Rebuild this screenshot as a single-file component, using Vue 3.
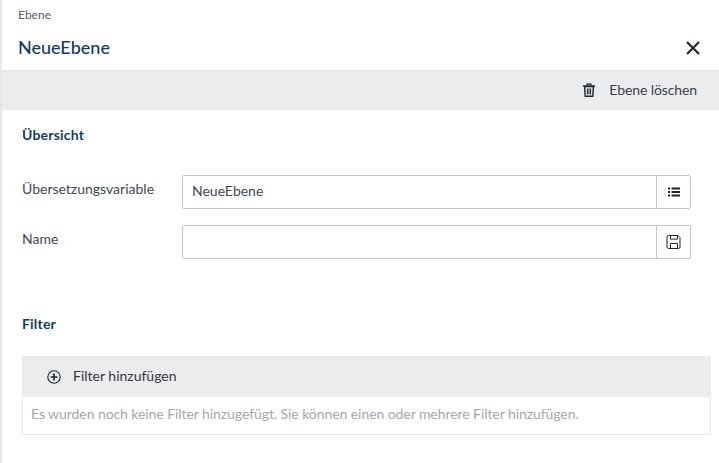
<template>
  <div class="panel">
    <header class="head">
      <div class="kicker">Ebene</div>
      <div class="title-row">
        <h1 class="title">NeueEbene</h1>
        <button class="close" aria-label="Schließen">
          <svg width="16" height="16" viewBox="0 0 16 16"><path d="M2 2 L14 14 M14 2 L2 14" stroke="#1f2a36" stroke-width="2.2" fill="none" /></svg>
        </button>
      </div>
    </header>

    <div class="toolbar">
      <button class="tool">
        <svg width="14" height="14" viewBox="0 0 14 14" fill="none" stroke="#1c2530">
          <path d="M1 3h12" stroke-width="1.4" />
          <path d="M5 2.6V1.2h4v1.4" stroke-width="1.2" />
          <path d="M2.6 3.6h8.8l-.6 9.6H3.2z" stroke-width="1.4" />
          <path d="M5.4 5.4v6M7 5.4v6M8.6 5.4v6" stroke-width="1" />
        </svg>
        <span>Ebene löschen</span>
      </button>
    </div>

    <section class="overview">
      <h2 class="section-title">Übersicht</h2>
      <div class="fields">
        <div v-for="field in fields" :key="field.label" class="field">
          <label class="label">{{ field.label }}</label>
          <div class="input-group">
            <div class="input">{{ field.value }}</div>
            <button class="addon">
              <svg v-if="field.icon === 'list'" width="14" height="14" viewBox="0 0 14 14" fill="#1c2530">
                <path d="M1 2.6h2v1.8H1zM1 6.1h2v1.8H1zM1 9.6h2v1.8H1zM4.5 2.6H13v1.8H4.5zM4.5 6.1H13v1.8H4.5zM4.5 9.6H13v1.8H4.5z" />
              </svg>
              <svg v-else width="16" height="16" viewBox="0 0 16 16" fill="none" stroke="#1c2530" stroke-width="1">
                <path d="M2.5 1.5h9.5l2 2v9.5a1.5 1.5 0 0 1-1.5 1.5h-10a1.5 1.5 0 0 1-1.5-1.5V3a1.5 1.5 0 0 1 1.5-1.5z" />
                <path d="M4.5 1.5v3.6h7V1.5M4.5 14.5V9.5h7v5" />
              </svg>
            </button>
          </div>
        </div>
      </div>
    </section>

    <section class="filter">
      <h2 class="section-title">Filter</h2>
      <div class="filter-box">
        <button class="filter-add">
          <svg width="14" height="14" viewBox="0 0 14 14" fill="none" stroke="#1c2530">
            <circle cx="7" cy="7" r="6.2" stroke-width="1.1" />
            <path d="M7 3.6v6.8M3.6 7h6.8" stroke-width="1.7" />
          </svg>
          <span>Filter hinzufügen</span>
        </button>
        <p class="empty">Es wurden noch keine Filter hinzugefügt. Sie können einen oder mehrere Filter hinzufügen.</p>
      </div>
    </section>
  </div>
</template>

<script setup>
const fields = [
  { label: 'Übersetzungsvariable', value: 'NeueEbene', icon: 'list' },
  { label: 'Name', value: '', icon: 'save' }
];
</script>

<style>
html, body {
  background: #fff;
}
</style>

<style scoped>
.panel {
  width: 719px;
  height: 463px;
  box-sizing: border-box;
  border-left: 2px solid #e6e7e8;
  font-family: "Lato", "Noto Sans", sans-serif;
  color: #3a424c;
  overflow: hidden;
}

.head {
  height: 70px;
  padding: 8px 18px 0 16px;
  box-sizing: border-box;
}

.kicker {
  font-size: 12px;
  line-height: 14px;
  color: #55606b;
}

.title-row {
  display: flex;
  align-items: center;
  justify-content: space-between;
  margin-top: 13px;
}

.title {
  margin: 0;
  font-size: 18px;
  line-height: 24px;
  font-weight: 500;
  color: #0f3b66;
}

.close,
.tool,
.addon,
.filter-add {
  border: 0;
  background: none;
  padding: 0;
  font: inherit;
  color: inherit;
}

.close {
  display: flex;
  width: 16px;
  height: 16px;
  margin-top: 2px;
}

.toolbar {
  height: 40px;
  box-sizing: border-box;
  display: flex;
  justify-content: flex-end;
  align-items: center;
  padding-right: 22px;
  padding-bottom: 2px;
  background: #ebecee;
  border-top: 1px solid #e4e5e7;
}

.tool {
  display: flex;
  align-items: center;
  gap: 13px;
  font-size: 14px;
  letter-spacing: -0.1px;
  color: #3a3f4a;
}

.section-title {
  margin: 0;
  font-size: 14px;
  line-height: 18px;
  font-weight: 700;
  letter-spacing: 0.2px;
  color: #123c63;
}

.overview {
  padding: 16px 28px 0 20px;
}

.fields {
  display: flex;
  flex-direction: column;
  gap: 16px;
  margin-top: 31px;
}

.field {
  display: flex;
  align-items: flex-start;
}

.label {
  width: 160px;
  font-size: 14px;
  line-height: 18px;
  padding-top: 5px;
  color: #3f4853;
}

.input-group {
  flex: 1;
  display: flex;
  height: 34px;
  box-sizing: border-box;
  border: 1px solid #c6c6c6;
  border-radius: 2px;
}

.input {
  flex: 1;
  padding-left: 9px;
  font-size: 14px;
  line-height: 30px;
  color: #3f4853;
}

.addon {
  width: 34px;
  display: flex;
  align-items: center;
  justify-content: center;
  border-left: 1px solid #c6c6c6;
}

.filter {
  padding: 56px 8px 0 20px;
}

.filter-box {
  margin-top: 23px;
  border: 1px solid #e8e9ea;
  height: 79px;
  box-sizing: border-box;
}

.filter-add {
  width: 100%;
  height: 40px;
  display: flex;
  align-items: center;
  gap: 12px;
  padding-left: 24px;
  padding-bottom: 4px;
  box-sizing: border-box;
  background: #ebecee;
  font-size: 14px;
  color: #3b3442;
}

.filter-add svg {
  margin-top: 4px;
}

.empty {
  margin: 0;
  padding-left: 8px;
  font-size: 14px;
  letter-spacing: -0.07px;
  line-height: 34px;
  color: #a3a8ad;
}
</style>
